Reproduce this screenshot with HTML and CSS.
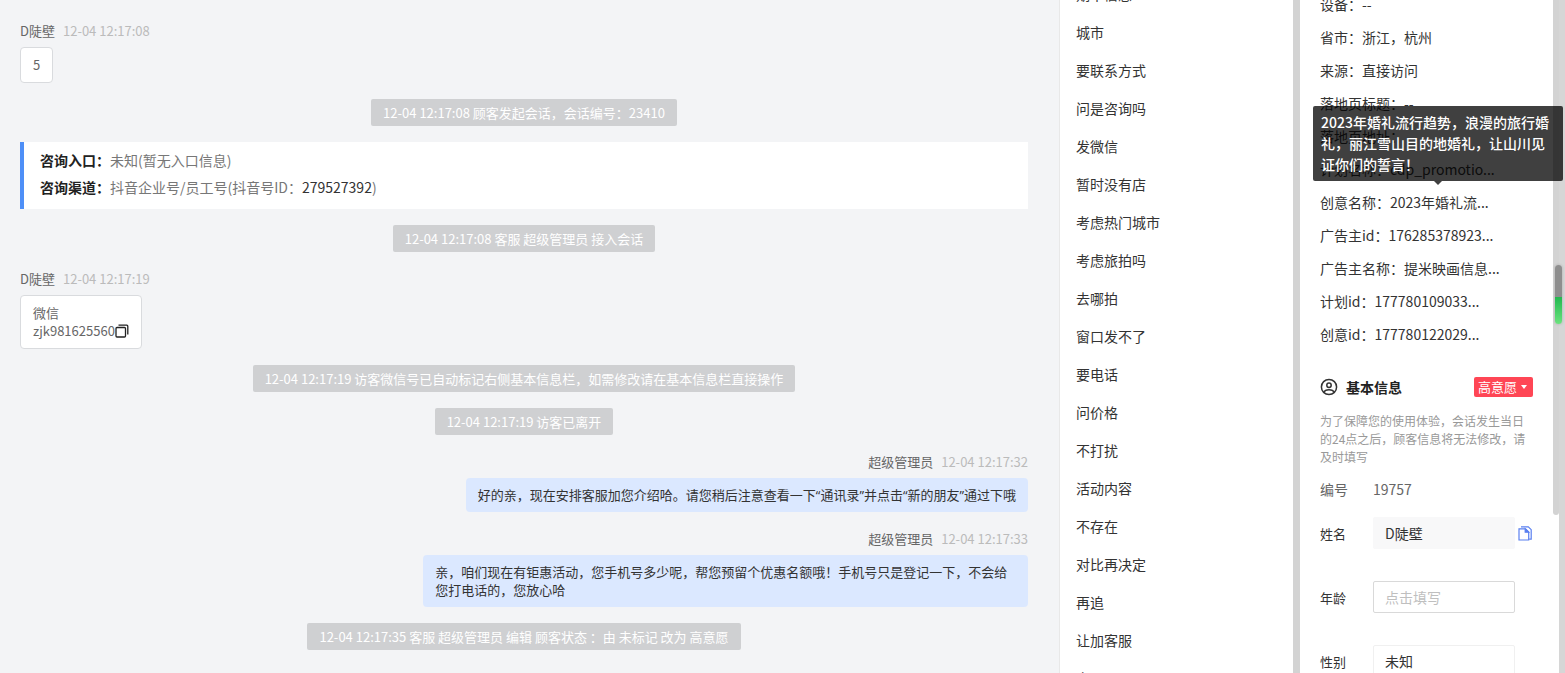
FILE: index.html
```html
<!DOCTYPE html>
<html lang="zh-CN">
<head>
    <meta charset="UTF-8">
    <title>客服会话</title>
    <link rel="stylesheet" href="styles.css">
</head>
<body>
    <!-- 会话记录 -->
    <main class="chat">
        <div class="message">
            <div class="message-head"><span class="name">D陡壁</span><span class="time">12-04 12:17:08</span></div>
            <div class="bubble">5</div>
        </div>

        <div class="notice">12-04 12:17:08 顾客发起会话，会话编号：23410</div>

        <div class="entry-info">
            <div><b>咨询入口：</b>未知(暂无入口信息)</div>
            <div><b>咨询渠道：</b>抖音企业号/员工号(抖音号ID：<span class="dark">279527392</span>)</div>
        </div>

        <div class="notice">12-04 12:17:08 客服 超级管理员 接入会话</div>

        <div class="message">
            <div class="message-head"><span class="name">D陡壁</span><span class="time">12-04 12:17:19</span></div>
            <div class="bubble">微信<br><span class="wechat">zjk981625560<button class="icon-btn" type="button" aria-label="复制"><svg width="14" height="14" viewBox="0 0 14 14" fill="none" stroke="#222" stroke-width="1.3"><rect x="1" y="3.5" width="9.5" height="9.5" rx="1"/><path d="M3.5 1.2h8.3a1 1 0 0 1 1 1v8.3"/></svg></button></span></div>
        </div>

        <div class="notice">12-04 12:17:19 访客微信号已自动标记右侧基本信息栏，如需修改请在基本信息栏直接操作</div>
        <div class="notice">12-04 12:17:19 访客已离开</div>

        <div class="message mine">
            <div class="message-head"><span class="name">超级管理员</span><span class="time">12-04 12:17:32</span></div>
            <div class="bubble">好的亲，现在安排客服加您介绍哈。请您稍后注意查看一下“通讯录”并点击“新的朋友”通过下哦</div>
        </div>

        <div class="message mine">
            <div class="message-head"><span class="name">超级管理员</span><span class="time">12-04 12:17:33</span></div>
            <div class="bubble">亲，咱们现在有钜惠活动，您手机号多少呢，帮您预留个优惠名额哦！手机号只是登记一下，不会给您打电话的，您放心哈</div>
        </div>

        <div class="notice">12-04 12:17:35 客服 超级管理员 编辑 顾客状态 ：由 未标记 改为 高意愿</div>
    </main>

    <!-- 快捷回复 -->
    <aside class="replies">
        <ul>
            <li>期本信息</li>
            <li>城市</li>
            <li>要联系方式</li>
            <li>问是咨询吗</li>
            <li>发微信</li>
            <li>暂时没有店</li>
            <li>考虑热门城市</li>
            <li>考虑旅拍吗</li>
            <li>去哪拍</li>
            <li>窗口发不了</li>
            <li>要电话</li>
            <li>问价格</li>
            <li>不打扰</li>
            <li>活动内容</li>
            <li>不存在</li>
            <li>对比再决定</li>
            <li>再追</li>
            <li>让加客服</li>
            <li>定</li>
        </ul>
    </aside>

    <!-- 顾客信息 -->
    <aside class="customer">
        <div class="customer-body">
            <ul class="source">
                <li>设备：--</li>
                <li>省市：浙江，杭州</li>
                <li>来源：直接访问</li>
                <li>落地页标题：--</li>
                <li>落地页地址：</li>
                <li>计划名称：cdp_promotio...</li>
                <li class="has-tip">创意名称：2023年婚礼流...
                    <div class="tooltip" role="tooltip">2023年婚礼流行趋势，浪漫的旅行婚礼，丽江雪山目的地婚礼，让山川见证你们的誓言！</div>
                </li>
                <li>广告主id：176285378923...</li>
                <li>广告主名称：提米映画信息...</li>
                <li>计划id：177780109033...</li>
                <li>创意id：177780122029...</li>
            </ul>

            <div class="section-title">
                <svg width="18" height="18" viewBox="0 0 18 18" fill="none" stroke="#333" stroke-width="1.5"><circle cx="9" cy="9" r="7.6"/><circle cx="9" cy="7.2" r="2.2"/><path d="M3.8 14.2c.8-1.800 2.600-2.500 5.200-2.500s4.400.7 5.200 2.500"/></svg>
                <h2>基本信息</h2>
                <button class="tag" type="button">高意愿<i class="caret"></i></button>
            </div>
            <p class="hint">为了保障您的使用体验，会话发生当日的24点之后，顾客信息将无法修改，请及时填写</p>
            <div class="number"><span class="key">编号</span><span>19757</span></div>

            <form>
                <div class="field">
                    <label class="key" for="name">姓名</label>
                    <input class="filled" id="name" type="text" value="D陡壁">
                    <button class="icon-btn" type="button" aria-label="复制姓名"><svg width="14" height="15" viewBox="0 0 14 15" fill="none" stroke="#5b80f0" stroke-width="1.2"><path d="M1 2.800h6.500l3.200 3.200v8H1z"/><path d="M7.200 2.800v3.400h3.500z" fill="#5b80f0"/><path d="M3 .8h7.300l2.900 2.900v9.500h-2"/></svg></button>
                </div>
                <div class="field">
                    <label class="key" for="age">年龄</label>
                    <input id="age" type="text" placeholder="点击填写">
                </div>
                <div class="field">
                    <label class="key" for="gender">性别</label>
                    <select id="gender">
                        <option>未知</option>
                        <option>男</option>
                        <option>女</option>
                    </select>
                </div>
            </form>
        </div>
        <div class="track"><div class="thumb"></div></div>
        <div class="page-edge"></div>
        <div class="volume"></div>
    </aside>
</body>
</html>
```

FILE: styles.css
```css
* {
    box-sizing: border-box;
}

body {
    margin: 0;
    height: 100vh;
    display: flex;
    overflow: hidden;
    font-family: "Noto Sans CJK SC", sans-serif;
    font-size: 14px;
    color: #333;
    background: #fff;
}

ul {
    list-style: none;
    margin: 0;
    padding: 0;
}

button, input, select {
    font: inherit;
    color: inherit;
}

/* chat */
.chat {
    flex: 1;
    min-width: 0;
    display: flex;
    flex-direction: column;
    gap: 16px;
    padding: 20px 31px 0 20px;
    background: #f3f4f6;
    border-right: 1px solid #e8e8e8;
    font-size: 13px;
    line-height: 18px;
    overflow: hidden;
}

.message {
    display: flex;
    flex-direction: column;
    align-items: flex-start;
    gap: 5px;
}

.message-head {
    display: flex;
    gap: 8px;
    line-height: 22px;
}

.name {
    color: #666;
}

.time {
    color: #bbb;
}

.bubble {
    max-width: 60%;
    padding: 8px 12px;
    background: #fff;
    border: 1px solid #d9dbde;
    border-radius: 4px;
    color: #666;
}

.mine {
    align-items: flex-end;
}

.mine .bubble {
    font-family: "Open Sans", "Noto Sans CJK SC", sans-serif;
    background: #dbe8ff;
    border: none;
    color: #333;
}

.notice {
    align-self: center;
    padding: 5px 12px 4px;
    background: #cfd0d2;
    border-radius: 2px;
    color: #fff;
}

.entry-info {
    padding: 5px 16px 8px;
    background: #fff;
    border-left: 4px solid #4e8ff7;
    font-size: 14px;
    line-height: 27px;
    color: #777;
}

.entry-info b {
    color: #222;
}

.dark {
    color: #333;
}

.wechat {
    display: flex;
    align-items: center;
}

.icon-btn {
    display: flex;
    padding: 0;
    border: none;
    background: none;
    cursor: pointer;
}

/* quick replies */
.replies {
    width: 240px;
    border-right: 7px solid #d3d3d3;
    overflow: hidden;
}

.replies ul {
    margin-top: -25px;
    padding-left: 16px;
}

.replies li {
    line-height: 38px;
}

/* customer panel */
.customer {
    position: relative;
    width: 265px;
    display: flex;
}

.customer-body {
    flex: 1;
    min-width: 0;
    padding: 0 20px;
}

.source {
    margin-top: -12px;
}

.source li {
    line-height: 33px;
    white-space: nowrap;
}

.has-tip {
    position: relative;
}

.tooltip {
    position: absolute;
    left: -7px;
    bottom: 38px;
    width: 250px;
    padding: 6px 8px;
    background: rgba(0, 0, 0, 0.75);
    border-radius: 2px;
    color: #fff;
    font-weight: 500;
    line-height: 21px;
    white-space: normal;
    z-index: 2;
}

.tooltip::after {
    content: "";
    position: absolute;
    top: 100%;
    left: 50%;
    margin-left: -4px;
    border: 4px solid transparent;
    border-top-color: rgba(0, 0, 0, 0.75);
    border-bottom: none;
}

.section-title {
    display: flex;
    align-items: center;
    gap: 8px;
    margin-top: 25px;
    line-height: 22px;
}

.section-title h2 {
    flex: 1;
    margin: 0;
    font-size: 14px;
    color: #222;
}

.tag {
    display: flex;
    align-items: center;
    gap: 4px;
    height: 20px;
    padding: 0 6px 0 4px;
    background: #ff4655;
    border: none;
    border-radius: 2px;
    color: #fff;
    font-size: 13px;
    line-height: 20px;
}

.caret {
    border: 3px solid transparent;
    border-top: 4px solid #fff;
    border-bottom: none;
}

.hint {
    margin: 14px 0 13px;
    font-size: 12px;
    line-height: 18px;
    color: #999;
}

.number {
    display: flex;
    margin-bottom: 18px;
    line-height: 20px;
    color: #666;
}

.key {
    width: 53px;
}

.field {
    display: flex;
    align-items: center;
    margin-bottom: 32px;
}

.field label {
    font-size: 13px;
    color: #333;
}

.field input,
.field select {
    width: 142px;
    height: 32px;
    padding: 0 11px;
    background: #fff;
    border: 1px solid #d9d9d9;
    border-radius: 2px;
    appearance: none;
}

.field .filled {
    background: #f8f8f9;
    border-color: #f8f8f9;
}

.field select {
    border-color: #f0f0f0;
}

.field ::placeholder {
    color: #bfbfbf;
}

.field .icon-btn {
    margin-left: 3px;
}

.track {
    width: 6px;
}

.thumb {
    height: 515px;
    background: #d3d3d3;
    border-radius: 0 0 3px 3px;
}

.page-edge {
    width: 6px;
    background: #d6d6d6;
}

/* floating level bar over the scrollbar */
.volume {
    position: absolute;
    top: 265px;
    right: 3px;
    width: 7px;
    height: 59px;
    border-radius: 4px;
    background: linear-gradient(#8e8e8e 0 32px, #22b84f 32px, #6be37e);
    box-shadow: 0 0 3px rgba(0, 0, 0, 0.2);
}
```
